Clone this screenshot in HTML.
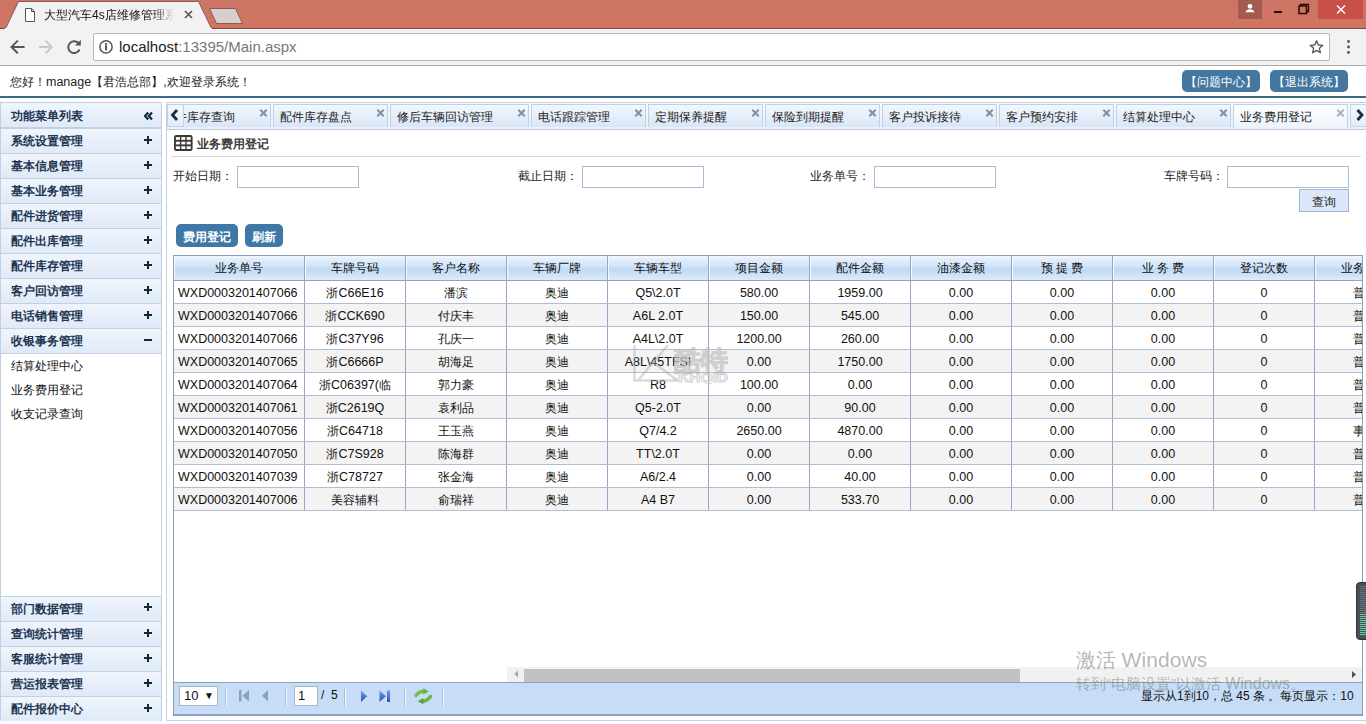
<!DOCTYPE html>
<html><head><meta charset="utf-8">
<style>
*{box-sizing:border-box}
html,body{margin:0;padding:0}
body{width:1366px;height:724px;overflow:hidden;position:relative;background:#fff;font-family:"Liberation Sans",sans-serif;font-size:12px;color:#222}
.a{position:absolute}
/* chrome */
#tbar{left:0;top:0;width:1366px;height:29px;background:linear-gradient(#cb7566,#d27462);border-bottom:1px solid #7d4c45}
#tool{left:0;top:29px;width:1366px;height:37px;background:#f2f2f2;border-bottom:1px solid #a9a9a9}
#addr{left:93px;top:33px;width:1237px;height:28px;background:#fff;border:1px solid #b8b8b8;border-radius:2px}
#url{left:119px;top:37px;font-size:15px;color:#777;white-space:nowrap;line-height:20px}
#url b{font-weight:normal;color:#222}
/* page */
#greet{left:10px;top:75px;line-height:14px;white-space:nowrap;color:#222}
.hbtn{top:70px;height:22px;width:78px;background:#44779f;border-radius:5px;color:#fff;line-height:24px;font-weight:500;text-align:center;font-size:12px}
#hline{left:0;top:96px;width:1366px;height:2px;background:#3b6986}
#side{left:0;top:102px;width:162px;height:619px;border:1px solid #c3cfe2;background:#fff}
.mh,.mi{position:absolute;left:1px;width:160px;height:25px;background:linear-gradient(#f0f5fc,#dfe9f8);border-bottom:1px solid #c4cfdf;font-weight:bold;color:#1d3552;line-height:25px;padding-left:10px;white-space:nowrap}
.mh{height:25px;border-bottom:2px solid #c4cfdf;line-height:27px!important}
.pl,.mn,.dbl{position:absolute;left:143px;top:0;width:10px;height:25px}
.pl:before{content:"";position:absolute;left:0;top:10px;width:8px;height:2px;background:#0f2a33}
.pl:after{content:"";position:absolute;left:3px;top:7px;width:2px;height:8px;background:#0f2a33}
.mn:before{content:"";position:absolute;left:0;top:10px;width:8px;height:2px;background:#0f2a33}
.dbl{top:9px;height:10px}
.sub{position:absolute;left:11px;line-height:14px;color:#111;white-space:nowrap}
#main{left:166px;top:102px;width:1210px;height:619px;border:1px solid #c3cfe2;background:#fff}
#tabs{left:167px;top:103px;width:1199px;height:27px;background:linear-gradient(#f7faff,#e9f0fa);border-bottom:1px solid #bccbe0}
#tabclip{left:183px;top:103px;width:1167px;height:26px;overflow:hidden}
.tab{position:absolute;top:1px;height:23px;background:linear-gradient(#f3f7fd,#d9e6f7);border:1px solid #bcd0e8;border-bottom:none;line-height:24px;padding-left:6px;white-space:nowrap;overflow:hidden;color:#222}
.tab .x{position:absolute;right:2px;top:4px;width:8px;height:8px}
.tab .x:before,.tab .x:after{content:"";position:absolute;left:-1px;top:3px;width:9px;height:2px;background:#7d919e;transform:rotate(45deg)}
.tab .x:after{transform:rotate(-45deg)}
.tab.sel{background:linear-gradient(#fdfeff,#edf3fb);height:24px}
.tab.sel .x:before,.tab.sel .x:after{background:#a3b5bb}
#gbox{left:173px;top:255px;width:1190px;height:461px;overflow:hidden}
#grid{position:absolute;left:0;top:0;border-collapse:collapse;table-layout:fixed;width:1243px}
#gborder{left:173px;top:255px;width:1190px;height:461px;border:1px solid #909eb5}
#grid td{border:1px solid #b2bcd4;border-left-color:#98a6c8;border-right-color:#98a6c8;height:23px;text-align:center;white-space:nowrap;overflow:hidden;padding:2px 0 0 0;color:#111}
#grid tr.hd td{height:25px;background:linear-gradient(#fbfdff 0,#fbfdff 1px,#e6f0fc 1px,#d6e7f9 35%,#bfdaf5 55%,#c9e0f7 70%,#e0ecfa 100%);border-top-color:#8f98ab;border-bottom-color:#9aa3b6;box-shadow:inset 1px 0 0 #f4f9ff}
#grid tr.alt td{background:#f3f3f3}
#grid tr.nor td:first-child,#grid tr.alt td:first-child{text-align:left;padding-left:4px}
#grid tr.hd td{padding-top:1px}
#grid .l{font-size:12.5px}
.scl,.scr{background:linear-gradient(#f4f8fd,#e3ecf9);border:1px solid #c3d1e6}
.lbl{top:169px;line-height:14px;white-space:nowrap;color:#222}
.inp{top:166px;width:122px;height:22px;border:1px solid #a9bcd3;background:#fff}
.qbtn{left:1299px;top:189px;width:50px;height:23px;border:1px solid #9fb6d3;background:#dce8f8;text-align:center;line-height:24px;color:#222}
.bbtn{top:224px;height:23px;background:#3f78a6;border-radius:5px;color:#fff;font-weight:bold;text-align:center;line-height:27px;white-space:nowrap}
#pager{left:174px;top:682px;width:1188px;height:33px;background:#c6dcf7;border-top:1px solid #8fa3bb;border-bottom:1px solid #8fa3bb}
.psel{left:179px;top:686px;width:39px;height:20px;background:#fff;border:1px solid #a8b4c2;line-height:18px;padding-left:4px;font-size:13px;color:#111}
.pinp{left:294px;top:686px;width:24px;height:20px;background:#fff;border:1px solid #a8b4c2;line-height:18px;padding-left:3px;font-size:13px;color:#111}
.psep{top:688px;width:1px;height:18px;background:#f4f9ff;box-shadow:-1px 0 0 #a9bdd8}
</style></head><body>
<!-- browser chrome -->
<div class="a" id="tbar"></div>
<div class="a" id="tool"></div>
<div class="a" id="addr"></div>
<div class="a" id="url"><b>localhost</b>:13395/Main.aspx</div>

<!-- page -->
<div class="a" id="greet">您好！<span style="font-size:12.5px">manage</span>【君浩总部】,欢迎登录系统！</div>
<div class="a hbtn" style="left:1182px">【问题中心】</div>
<div class="a hbtn" style="left:1270px">【退出系统】</div>
<div class="a" id="hline"></div>

<div class="a" id="side"></div>
<div class="mh" style="top:103px;height:26px;line-height:26px">功能菜单列表<svg class="dbl" width="10" height="10"><path d="M4.2,0.5 L1,4 L4.2,7.5 M8,0.5 L4.8,4 L8,7.5" fill="none" stroke="#0f2b3b" stroke-width="2.2"/></svg></div>
<div class="mi" style="top:129px">系统设置管理<span class="pl"></span></div>
<div class="mi" style="top:154px">基本信息管理<span class="pl"></span></div>
<div class="mi" style="top:179px">基本业务管理<span class="pl"></span></div>
<div class="mi" style="top:204px">配件进货管理<span class="pl"></span></div>
<div class="mi" style="top:229px">配件出库管理<span class="pl"></span></div>
<div class="mi" style="top:254px">配件库存管理<span class="pl"></span></div>
<div class="mi" style="top:279px">客户回访管理<span class="pl"></span></div>
<div class="mi" style="top:304px">电话销售管理<span class="pl"></span></div>
<div class="mi" style="top:329px">收银事务管理<span class="mn"></span></div>
<div class="sub" style="top:359px">结算处理中心</div>
<div class="sub" style="top:383px">业务费用登记</div>
<div class="sub" style="top:407px">收支记录查询</div>
<div class="mi" style="top:596px;height:26px;border-top:1px solid #c3d3e6;line-height:24px">部门数据管理<span class="pl" style="top:-1px"></span></div>
<div class="mi" style="top:622px">查询统计管理<span class="pl"></span></div>
<div class="mi" style="top:647px">客服统计管理<span class="pl"></span></div>
<div class="mi" style="top:672px">营运报表管理<span class="pl"></span></div>
<div class="mi" style="top:697px;height:24px;border-bottom:none">配件报价中心<span class="pl"></span></div>
<div class="a" id="main"></div>
<div class="a" id="tabs"></div>
<div class="a" id="tabclip">
<div class="tab" style="left:-27px;width:115px">配件库存查询<span class="x"></span></div>
<div class="tab" style="left:90px;width:115px">配件库存盘点<span class="x"></span></div>
<div class="tab" style="left:207px;width:139px">修后车辆回访管理<span class="x"></span></div>
<div class="tab" style="left:348px;width:115px">电话跟踪管理<span class="x"></span></div>
<div class="tab" style="left:465px;width:115px">定期保养提醒<span class="x"></span></div>
<div class="tab" style="left:582px;width:115px">保险到期提醒<span class="x"></span></div>
<div class="tab" style="left:699px;width:115px">客户投诉接待<span class="x"></span></div>
<div class="tab" style="left:816px;width:115px">客户预约安排<span class="x"></span></div>
<div class="tab" style="left:933px;width:115px">结算处理中心<span class="x"></span></div>
<div class="tab sel" style="left:1050px;width:115px">业务费用登记<span class="x"></span></div>
</div>
<div class="a" id="gbox">
<table id="grid"><colgroup>
<col style="width:131px">
<col style="width:101px">
<col style="width:101px">
<col style="width:101px">
<col style="width:101px">
<col style="width:101px">
<col style="width:101px">
<col style="width:101px">
<col style="width:101px">
<col style="width:101px">
<col style="width:101px">
<col style="width:101px">
</colgroup><tr class="hd">
<td>业务单号</td>
<td>车牌号码</td>
<td>客户名称</td>
<td>车辆厂牌</td>
<td>车辆车型</td>
<td>项目金额</td>
<td>配件金额</td>
<td>油漆金额</td>
<td>预 提 费</td>
<td>业 务 费</td>
<td>登记次数</td>
<td>业务类型</td>
</tr>
<tr class="nor"><td><span class="l">WXD0003201407066</span></td><td>浙<span class="l">C66E16</span></td><td>潘滨</td><td>奥迪</td><td><span class="l">Q5&#92;2.0T</span></td><td><span class="l">580.00</span></td><td><span class="l">1959.00</span></td><td><span class="l">0.00</span></td><td><span class="l">0.00</span></td><td><span class="l">0.00</span></td><td><span class="l">0</span></td><td>普通</td></tr>
<tr class="alt"><td><span class="l">WXD0003201407066</span></td><td>浙<span class="l">CCK690</span></td><td>付庆丰</td><td>奥迪</td><td><span class="l">A6L 2.0T</span></td><td><span class="l">150.00</span></td><td><span class="l">545.00</span></td><td><span class="l">0.00</span></td><td><span class="l">0.00</span></td><td><span class="l">0.00</span></td><td><span class="l">0</span></td><td>普通</td></tr>
<tr class="nor"><td><span class="l">WXD0003201407066</span></td><td>浙<span class="l">C37Y96</span></td><td>孔庆一</td><td>奥迪</td><td><span class="l">A4L&#92;2.0T</span></td><td><span class="l">1200.00</span></td><td><span class="l">260.00</span></td><td><span class="l">0.00</span></td><td><span class="l">0.00</span></td><td><span class="l">0.00</span></td><td><span class="l">0</span></td><td>普通</td></tr>
<tr class="alt"><td><span class="l">WXD0003201407065</span></td><td>浙<span class="l">C6666P</span></td><td>胡海足</td><td>奥迪</td><td><span class="l">A8L&#92;45TFSI</span></td><td><span class="l">0.00</span></td><td><span class="l">1750.00</span></td><td><span class="l">0.00</span></td><td><span class="l">0.00</span></td><td><span class="l">0.00</span></td><td><span class="l">0</span></td><td>普通</td></tr>
<tr class="nor"><td><span class="l">WXD0003201407064</span></td><td>浙<span class="l">C06397(</span>临</td><td>郭力豪</td><td>奥迪</td><td><span class="l">R8</span></td><td><span class="l">100.00</span></td><td><span class="l">0.00</span></td><td><span class="l">0.00</span></td><td><span class="l">0.00</span></td><td><span class="l">0.00</span></td><td><span class="l">0</span></td><td>普通</td></tr>
<tr class="alt"><td><span class="l">WXD0003201407061</span></td><td>浙<span class="l">C2619Q</span></td><td>袁利品</td><td>奥迪</td><td><span class="l">Q5-2.0T</span></td><td><span class="l">0.00</span></td><td><span class="l">90.00</span></td><td><span class="l">0.00</span></td><td><span class="l">0.00</span></td><td><span class="l">0.00</span></td><td><span class="l">0</span></td><td>普通</td></tr>
<tr class="nor"><td><span class="l">WXD0003201407056</span></td><td>浙<span class="l">C64718</span></td><td>王玉燕</td><td>奥迪</td><td><span class="l">Q7/4.2</span></td><td><span class="l">2650.00</span></td><td><span class="l">4870.00</span></td><td><span class="l">0.00</span></td><td><span class="l">0.00</span></td><td><span class="l">0.00</span></td><td><span class="l">0</span></td><td>事故</td></tr>
<tr class="alt"><td><span class="l">WXD0003201407050</span></td><td>浙<span class="l">C7S928</span></td><td>陈海群</td><td>奥迪</td><td><span class="l">TT&#92;2.0T</span></td><td><span class="l">0.00</span></td><td><span class="l">0.00</span></td><td><span class="l">0.00</span></td><td><span class="l">0.00</span></td><td><span class="l">0.00</span></td><td><span class="l">0</span></td><td>普通</td></tr>
<tr class="nor"><td><span class="l">WXD0003201407039</span></td><td>浙<span class="l">C78727</span></td><td>张金海</td><td>奥迪</td><td><span class="l">A6/2.4</span></td><td><span class="l">0.00</span></td><td><span class="l">40.00</span></td><td><span class="l">0.00</span></td><td><span class="l">0.00</span></td><td><span class="l">0.00</span></td><td><span class="l">0</span></td><td>普通</td></tr>
<tr class="alt"><td><span class="l">WXD0003201407006</span></td><td>美容辅料</td><td>俞瑞祥</td><td>奥迪</td><td><span class="l">A4 B7</span></td><td><span class="l">0.00</span></td><td><span class="l">533.70</span></td><td><span class="l">0.00</span></td><td><span class="l">0.00</span></td><td><span class="l">0.00</span></td><td><span class="l">0</span></td><td>普通</td></tr>
</table>
</div>
<div class="a" id="gborder"></div>
<!-- chrome tab -->
<svg class="a" style="left:0;top:0" width="1366" height="29">
<polygon points="5.5,28.5 18.5,1.5 198.5,1.5 211.5,28.5" fill="#f2f2f2" stroke="#8a5850" stroke-width="1"/>
<rect x="5" y="28" width="207" height="2" fill="#f2f2f2"/>
<polygon points="209.5,8.5 235.5,8.5 242.5,23.5 216.5,23.5" fill="#d6cfce" stroke="#8b5a52" stroke-width="1"/>
<!-- page icon -->
<path d="M25.5,8.5 H31.5 L34.5,11.5 V21.5 H25.5 Z M31.5,8.5 V11.5 H34.5" fill="#fff" stroke="#555" stroke-width="1"/>
<!-- close x -->
<path d="M185,11 L192,18 M192,11 L185,18" stroke="#555" stroke-width="1.6"/>
<!-- user -->
<rect x="1238" y="0" width="24" height="19" fill="#a35b4e"/>
<circle cx="1250" cy="6.3" r="2.4" fill="#fff"/>
<path d="M1245.5,12.3 Q1246.5,9.3 1250,9.3 Q1253.5,9.3 1254.5,12.3 Z" fill="#fff"/>
<rect x="1274" y="11" width="8" height="2" fill="#2a0a05"/>
<path d="M1300.5,6.5 V4.5 H1308.5 V11.5 H1306.5" fill="none" stroke="#2a0a05" stroke-width="1.3"/>
<rect x="1299" y="6" width="7.5" height="7.5" fill="none" stroke="#2a0a05" stroke-width="1.5"/>
<rect x="1318" y="0" width="45" height="19" fill="#c94f49"/>
<path d="M1337,5.5 L1345,13.5 M1345,5.5 L1337,13.5" stroke="#fff" stroke-width="1.5"/>
</svg>
<div class="a" style="left:44px;top:7px;width:130px;height:16px;overflow:hidden;white-space:nowrap;font-size:12px;line-height:16px;color:#111;-webkit-mask-image:linear-gradient(90deg,#000 110px,transparent 130px)">大型汽车4s店维修管理系统</div>
<!-- toolbar icons -->
<svg class="a" style="left:0;top:29px" width="1366" height="36">
<g transform="translate(0,-29)">
<path d="M24.6,46.9 H12 M17.8,40.6 L11.5,46.9 L17.8,53.2" fill="none" stroke="#555" stroke-width="2"/>
<path d="M39,46.9 H51.8 M45.5,40.6 L51.8,46.9 L45.5,53.2" fill="none" stroke="#c9c9c9" stroke-width="2"/>
<path d="M79.2,44 A5.9,5.9 0 1 0 79.6,49.5" fill="none" stroke="#555" stroke-width="1.9"/>
<polygon points="80.8,39.8 80.8,45.6 75,45.6" fill="#555"/>
<circle cx="106" cy="46.9" r="6.1" fill="none" stroke="#555" stroke-width="1.5"/>
<rect x="105" y="43" width="2" height="1.8" fill="#555"/>
<rect x="105" y="45.3" width="2" height="5.2" fill="#555"/>
<polygon points="1316.5,40.8 1318.3,45 1322.8,45.3 1319.4,48.3 1320.4,52.8 1316.5,50.4 1312.6,52.8 1313.6,48.3 1310.2,45.3 1314.7,45" fill="none" stroke="#555" stroke-width="1.3" stroke-linejoin="round"/>
<circle cx="1348.5" cy="41.5" r="1.4" fill="#555"/>
<circle cx="1348.5" cy="47" r="1.4" fill="#555"/>
<circle cx="1348.5" cy="52.5" r="1.4" fill="#555"/>
</g>
</svg>

<!-- tab scrollers -->
<div class="a scl" style="left:167px;top:104px;width:17px;height:23px"></div>
<div class="a scr" style="left:1350px;top:104px;width:17px;height:23px"></div>
<svg class="a" style="left:167px;top:104px" width="17" height="23"><path d="M10,6 L5.5,11 L10,16" fill="none" stroke="#1b2d45" stroke-width="2.8"/></svg>
<svg class="a" style="left:1350px;top:104px" width="16" height="23"><path d="M7.5,6 L12,11 L7.5,16" fill="none" stroke="#1b2d45" stroke-width="2.8"/></svg>

<!-- title -->
<svg class="a" style="left:174px;top:135px" width="19" height="16">
<rect x="0" y="0" width="18.6" height="16" rx="2.2" fill="#3d3836"/>
<g fill="#fff">
<rect x="1.9" y="2.1" width="4" height="2.7"/><rect x="7.3" y="2.1" width="4" height="2.7"/><rect x="12.7" y="2.1" width="4" height="2.7"/>
<rect x="1.9" y="6.7" width="4" height="2.7"/><rect x="7.3" y="6.7" width="4" height="2.7"/><rect x="12.7" y="6.7" width="4" height="2.7"/>
<rect x="1.9" y="11.3" width="4" height="2.7"/><rect x="7.3" y="11.3" width="4" height="2.7"/><rect x="12.7" y="11.3" width="4" height="2.7"/>
</g></svg>
<div class="a" style="left:197px;top:137px;line-height:14px;font-weight:bold;color:#3c3c3c;white-space:nowrap">业务费用登记</div>
<div class="a" style="left:171px;top:156px;width:1190px;height:1px;background:#d6d6d6"></div>

<!-- form -->
<div class="a lbl" style="left:173px">开始日期：</div>
<div class="a inp" style="left:237px"></div>
<div class="a lbl" style="left:518px">截止日期：</div>
<div class="a inp" style="left:582px"></div>
<div class="a lbl" style="left:810px">业务单号：</div>
<div class="a inp" style="left:874px"></div>
<div class="a lbl" style="left:1164px">车牌号码：</div>
<div class="a inp" style="left:1227px"></div>
<div class="a qbtn">查询</div>
<div class="a bbtn" style="left:176px;width:62px">费用登记</div>
<div class="a bbtn" style="left:245px;width:38px">刷新</div>

<!-- h scrollbar -->
<div class="a" style="left:507px;top:667px;width:855px;height:15px;background:#f1f1f1"></div>
<div class="a" style="left:524px;top:669px;width:496px;height:13px;background:#c1c1c1"></div>
<svg class="a" style="left:507px;top:667px" width="855" height="15">
<polygon points="11,3.5 11,10.5 7.5,7" fill="#a3a3a3"/>
<polygon points="845,4 845,11 849,7.5" fill="#505050"/>
</svg>

<!-- pager -->
<div class="a" id="pager"></div>
<div class="a psel">10<span style="position:absolute;left:24px;top:0px;font-size:10px">&#9660;</span></div>
<div class="a psep" style="left:226px"></div>
<div class="a psep" style="left:286px"></div>
<div class="a psep" style="left:345px"></div>
<div class="a psep" style="left:405px"></div>
<div class="a psep" style="left:443px"></div>
<svg class="a" style="left:230px;top:686px" width="220" height="20">
<g fill="#8aa2bd">
<rect x="9" y="4" width="2.5" height="11.5"/>
<polygon points="19,4 19,15.5 12.5,9.75"/>
<polygon points="38,4 38,15.5 32,9.75"/>
</g>
<defs><linearGradient id="bl" x1="0" x2="0" y1="0" y2="1"><stop offset="0" stop-color="#6d9be8"/><stop offset="1" stop-color="#2a55b8"/></linearGradient>
<linearGradient id="gr" x1="0" x2="0" y1="0" y2="1"><stop offset="0" stop-color="#a6d67a"/><stop offset="1" stop-color="#5aa63a"/></linearGradient></defs>
<polygon points="131,4.5 131,16 137.2,10.25" fill="url(#bl)"/>
<polygon points="149.5,4.5 149.5,16 156,10.25" fill="url(#bl)"/>
<rect x="157" y="4.5" width="3" height="11.5" fill="url(#bl)"/>
<path d="M186,9.5 Q189,5.2 194.5,5.3" fill="none" stroke="#78bb4c" stroke-width="3.4" stroke-linecap="round"/>
<polygon points="193.2,2.2 198.8,5.4 193.2,8.6" fill="#6aae42"/>
<path d="M200.5,10.5 Q197.5,15.2 192,15.2" fill="none" stroke="#6cb244" stroke-width="3.4" stroke-linecap="round"/>
<polygon points="193.3,12 187.6,15.3 193.3,18.3" fill="#5ea63a"/>
</svg>
<div class="a pinp">1</div>
<div class="a" style="left:321px;top:688px;line-height:14px;font-size:12px;color:#111;white-space:pre">/  5</div>
<div class="a" style="left:1141px;top:689px;line-height:14px;font-size:12px;color:#111;white-space:nowrap">显示从1到10，总 45 条 。每页显示：10</div>

<!-- widget -->
<div class="a" style="left:1356px;top:582px;width:14px;height:58px;background:#4a5058;border-radius:4px;border:1px solid #2e3338"></div>
<div class="a" style="left:1360px;top:586px;width:6px;height:50px;background:repeating-linear-gradient(#6b747e 0 1px,transparent 1px 2px)"></div>
<div class="a" style="left:1360px;top:614px;width:6px;height:22px;background:repeating-linear-gradient(#5fd0a8 0 1px,transparent 1px 2px)"></div>

<!-- watermark -->
<div class="a" style="left:1076px;top:648px;font-size:20px;line-height:24px;color:rgba(120,120,120,0.55);white-space:nowrap">激活 <span style="font-size:21px;letter-spacing:0.1px">Windows</span></div>
<div class="a" style="left:1076px;top:675px;font-size:15px;line-height:17px;color:rgba(120,120,120,0.5);white-space:nowrap">转到“电脑设置”以激活 <span style="font-size:16px">Windows</span>。</div>
<!-- khqid logo watermark -->
<svg class="a" style="left:632px;top:342px" width="98" height="42">
<g fill="none" stroke="rgba(170,170,170,0.45)" stroke-width="2.5">
<path d="M2.5,3 V38.5 H46"/>
<path d="M7,37 L36,3 M22,21 L45,38"/>
</g>
<text x="42" y="28" font-size="27" font-weight="bold" fill="rgba(255,255,255,0.5)" stroke="rgba(165,165,165,0.5)" stroke-width="1" style="font-family:'Liberation Sans',sans-serif">酷特</text>
<text x="46" y="40" font-size="13" font-weight="bold" fill="rgba(255,255,255,0.5)" stroke="rgba(165,165,165,0.5)" stroke-width="1" textLength="50" lengthAdjust="spacingAndGlyphs" style="font-family:'Liberation Sans',sans-serif">KHQID</text>
</svg>

</body></html>
